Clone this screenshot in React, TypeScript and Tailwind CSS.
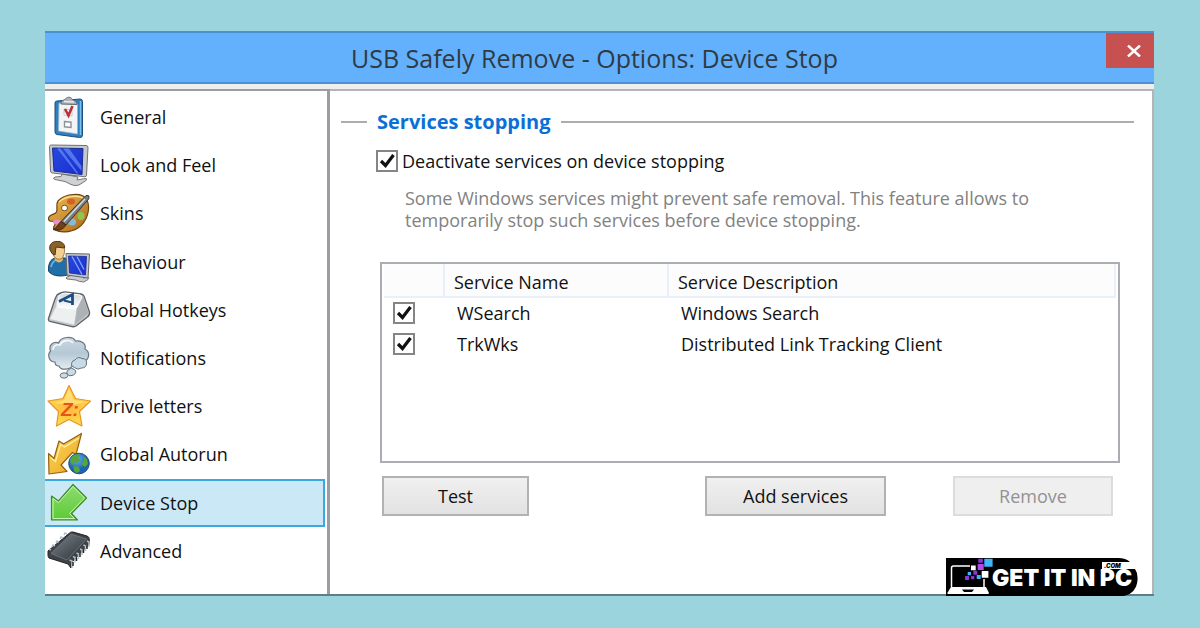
import { useState } from "react";
import type { ReactNode } from "react";

interface Page {
  name: string;
  icon: ReactNode;
}

interface Service {
  name: string;
  description: string;
}

const pages: Page[] = [
  {
    name: "General",
    icon: (
      <>
        <path d="M8 8q0-2 2-2L33 4q2.500 0 2.500 2.500V40q0 3-3 2.500L10 39.500q-2-.4-2-2.500z" fill="#2f7fc0" stroke="#1c4f80" />
        <path d="M33.500 6v34" stroke="#7cc0ee" strokeWidth="1.500" />
        <path d="M12 8l18.500 1v30L11.500 36z" fill="#f2f4f6" stroke="#9fb4c4" strokeWidth=".8" />
        <path d="M14 9c0-4 3-3.500 5-5.500 2-2 5-1.500 6 .5 1 2 5 1 5 5.500z" fill="#aeb4ba" stroke="#63696f" />
        <path d="M17 6.500l10 .5" stroke="#e8ebee" strokeWidth="1.500" />
        <path d="M17 14l8 1v6l-8-1z" fill="#fff" stroke="#c9c9d2" />
        <path d="M18 14l3.500 6.500 4-9.500" fill="none" stroke="#b8323a" strokeWidth="2.600" />
        <path d="M17.500 26.500l6.500.7v5.300l-6.500-.7z" fill="#fff" stroke="#8e9299" strokeWidth="1.400" />
      </>
    ),
  },
  {
    name: "Look and Feel",
    icon: (
      <>
        <path d="M15 31l16 3-1 3 8-1.500q3 0 1 2l-7 4.500q-4 1.500-8-.5l-6-3-10-2q-3-1 0-2.500l6-.5z" fill="#cfd2d5" stroke="#777" />
        <path d="M2.500 3.500q0-1.500 2-1.500l34.500.5q2 0 2 2L39.500 32q0 2-2 1.700L5.500 30q-2-.3-2-2z" fill="#c6c9cc" stroke="#6d7074" />
        <path d="M5.500 5l30.500.5-1 26L7 28z" fill="url(#screen)" stroke="#1d2b8c" />
        <path d="M10 5.500l3.500 0 18 25-2-.3zM16 5.500l6 0L34.500 23v5z" fill="#6f95f7" opacity=".65" />
      </>
    ),
  },
  {
    name: "Skins",
    icon: (
      <>
        <path d="M11 10C18 2 36 1 40 9c4 9 0 22-9 28-8 5-19 5-24 1-2-2 3-5 1-7-3-2-6 1-6.500-3C1 23 8 24 9.500 21c1.500-4-1-8 1.500-11z" fill="url(#wood)" stroke="#6e4312" strokeWidth="1.200" />
        <path d="M12 11C19 4 34 3.500 38 9" fill="none" stroke="#ffe39a" strokeWidth="1.300" />
        <ellipse cx="17.500" cy="17" rx="3" ry="2.800" fill="#fff" stroke="#7c521c" />
        <ellipse cx="24" cy="10.500" rx="4" ry="3" fill="#d85b28" />
        <ellipse cx="10" cy="31" rx="4" ry="2.500" fill="#e58fcb" />
        <ellipse cx="25" cy="31" rx="4" ry="3.500" fill="#80bddc" />
        <ellipse cx="34" cy="25" rx="3.500" ry="4" fill="#8fc552" />
        <path d="M38 5.500q2-2 4-.5.500 3-2 5L19 34l-5-3.500z" fill="#777d80" stroke="#34383a" />
        <path d="M38 8L17 30.500" stroke="#d6dbde" strokeWidth="1.500" />
        <path d="M14 30.500l5 3.500c-3 5-8 6-13 4.500 4-1 5-6 8-8z" fill="#704018" stroke="#43240b" />
      </>
    ),
  },
  {
    name: "Behaviour",
    icon: (
      <>
        <path d="M1.500 31C1 23 4 19 8 18h10c4 2 5 6 5 16-6 3-18 3-21.500-3z" fill="#226fa8" stroke="#123f63" />
        <path d="M4 27q1-5 5-7" fill="none" stroke="#61b4e4" strokeWidth="1.800" />
        <path d="M6 13l9 1 1 6q-4 5-8 0z" fill="#e6b36a" />
        <path d="M5.500 6l11-1c2 5 1 11-2 13.500-3 1.500-6 .5-8-3z" fill="#f3cf91" stroke="#8a632b" strokeWidth=".8" />
        <path d="M3 10C1.500 4 6 1 10.500 1.500c4-.5 8 3 7 6.500L9 7l-1 8-2.500-1z" fill="#8a6426" stroke="#4b3512" />
        <path d="M25 35l12 2-1 1 5-.5q2 .5 0 2l-4 2.500q-5 0-8-2l-9-1q-2-1 0-2z" fill="#c9cccf" stroke="#777" />
        <path d="M19 13.500l23.500.5-1.500 24L20 35z" fill="#c5c8cc" stroke="#63676c" />
        <path d="M21.500 16l18 .5-1 18.500-16-2z" fill="url(#screen)" stroke="#1d2b8c" strokeWidth=".8" />
        <path d="M25 16.500l10 18M30 16.500l7 13" stroke="#87a8fa" strokeWidth="1.300" />
      </>
    ),
  },
  {
    name: "Global Hotkeys",
    icon: (
      <>
        <path d="M10 7q2-2 8-3l16 2q2 .3 3 2l5.500 16q.5 3-2 5L29 38q-2 1-4 .7L3 33.500q-2-.7-1.500-3L8 11z" fill="#c4c7ca" stroke="#606468" strokeWidth="1.300" />
        <path d="M9.500 18l20 3-2.500 15.500L3 31z" fill="#edf0f1" />
        <path d="M30 21l6-13 5.500 17L28 36.500z" fill="#aeb2b6" />
        <path d="M12 8q2-2.500 6-3l15 2q2 1 1.500 3L30 19q-1 2.500-4 2l-14.500-2q-2-1-1.500-3z" fill="url(#key)" stroke="#fff" />
        <path d="M12 13.500l13.500-7v10.500" fill="none" stroke="#1b4e83" strokeWidth="2.800" />
        <path d="M17 12.500l8 2" stroke="#1b4e83" strokeWidth="2" />
      </>
    ),
  },
  {
    name: "Notifications",
    icon: (
      <>
        <path d="M8 26C2 26 0 19 3.500 15 1 9 7 5 11.500 7 14 0 26 0 28.500 5c6-1 11 3 9.500 8 6 3 4 12-2 12-2 3-6 4-9 3-3 6-13 7-15 2-2 0-4-1-4-4z" fill="url(#cloud)" stroke="#6c7780" strokeWidth="1.200" />
        <path d="M6 14c0-4 3-6 7-5 2-5 10-6 13-2" fill="none" stroke="#f4f9fc" strokeWidth="1.600" />
        <path d="M28 24q3-4 7-1.500 5 0 4.500 4.500 0 5-5 5-4 2.500-7-.5-4-1-3-4 .5-3 3.500-3.500z" fill="#c7dae5" stroke="#65727b" />
        <path d="M21.500 33.500q3-2.500 6 0 3 3-1 5.500-4 2-6-.5-2-2.500 1-5z" fill="#cbdce6" stroke="#65727b" />
        <ellipse cx="17" cy="39.500" rx="3.800" ry="2.700" fill="#cbdce6" stroke="#65727b" />
      </>
    ),
  },
  {
    name: "Drive letters",
    icon: (
      <>
        <path d="M22 1.500l6.500 13 15 2.500-11 10.500 2.500 14.500-13-6.500-12.500 6.500 2-14.500L1 17l15-2.500z" fill="url(#star)" stroke="#e69525" strokeWidth="1.200" strokeLinejoin="round" />
        <path d="M22 5l5 11 12 2-14 3-18-2 10-3z" fill="#fff3a3" opacity=".55" />
        <text x="14" y="32" fontFamily="Liberation Sans, sans-serif" fontSize="19" fontWeight="700" fontStyle="italic" fill="#e4541b">Z:</text>
      </>
    ),
  },
  {
    name: "Global Autorun",
    icon: (
      <>
        <path d="M34.500 1.500L29 22.500l-3.500-2L14 33l6 6.500-18 2.500L1.500 21.500l5.500 5L12 9l4.500 3z" fill="url(#gold)" stroke="#93620f" strokeWidth="1.200" strokeLinejoin="round" />
        <path d="M32 6L17.500 15l-4-2.500-5 17-5-4" fill="none" stroke="#fff0a8" strokeWidth="1.200" />
        <circle cx="32" cy="31.500" r="10.300" fill="url(#globe)" stroke="#1d4e80" />
        <path d="M24 26c3-4 7-4.500 9-3l-2 3 3 2-4 3-3-1-1 3-3-3zM36 24l4 3 1 5-3 3-4-3 3-3zM27 34l5 1 1 4-3 2c-3-1-4-4-3-7z" fill="#57a638" />
      </>
    ),
  },
  {
    name: "Device Stop",
    icon: (
      <>
        <path d="M26 3.500l13.500 13.500-15 15.500 6 6.500H4.500V15l7 5z" fill="url(#green)" stroke="#3c8d27" strokeWidth="1.200" strokeLinejoin="round" />
        <path d="M26 5.500L37.500 17l-15 15.500 5 5H6V17.500l5.500 4z" fill="none" stroke="#c9f5b4" />
      </>
    ),
  },
  {
    name: "Advanced",
    icon: (
      <>
        <path d="M22 4.500q1.500-2 4-1.500l14 4q2.500 1 2.300 3.500V15L24 34v5l-3-4-19-6q-1-1-1-3v-4z" fill="#3d4348" stroke="#202427" />
        <path d="M24 5l15.500 5L20 31 4 24.500z" fill="url(#chip)" stroke="#747b80" strokeWidth=".8" />
        <path d="M40 12l2 1v5M36.500 16l2 1v5M33 20l2 1v5M29.500 24l2 1v5M26 27.500l2 1v5M22.500 31l2.500 1v7M20 5l-2-1-1 2M16 9l-2-1-1 2M12 13l-2-1-1 2M8 17l-2-1-1 2M4 21l-2-1" fill="none" stroke="#b9bec2" strokeWidth="1.500" />
        <path d="M40 17v3M36.500 21v3M33 25v3M29.500 29v3M26 33v4" stroke="#22272a" strokeWidth="1.500" />
      </>
    ),
  },
];

const services: Service[] = [
  { name: "WSearch", description: "Windows Search" },
  { name: "TrkWks", description: "Distributed Link Tracking Client" },
];

// Gradients shared by the sidebar icons
function IconDefs() {
  return (
    <svg className="absolute h-0 w-0" aria-hidden="true">
      <defs>
        <linearGradient id="screen" x1="0" y1="0" x2="1" y2="1">
          <stop offset="0" stopColor="#2749e0" />
          <stop offset="1" stopColor="#1a2ed0" />
        </linearGradient>
        <linearGradient id="wood" x1="0" y1="0" x2="1" y2="1">
          <stop offset="0" stopColor="#f0bc4c" />
          <stop offset="1" stopColor="#a9691c" />
        </linearGradient>
        <linearGradient id="key" x1="0" y1="0" x2="0" y2="1">
          <stop offset="0" stopColor="#d3dadf" />
          <stop offset="1" stopColor="#ffffff" />
        </linearGradient>
        <linearGradient id="cloud" x1="0" y1="0" x2="0" y2="1">
          <stop offset="0" stopColor="#cbd9e2" />
          <stop offset="0.500" stopColor="#b4c8d5" />
          <stop offset="1" stopColor="#e3edf2" />
        </linearGradient>
        <radialGradient id="star">
          <stop offset="0" stopColor="#ffb637" />
          <stop offset="1" stopColor="#ffd84f" />
        </radialGradient>
        <linearGradient id="gold" x1="0" y1="0" x2="1" y2="1">
          <stop offset="0" stopColor="#ffd75a" />
          <stop offset="1" stopColor="#e9a624" />
        </linearGradient>
        <radialGradient id="globe" cx="0.400" cy="0.300">
          <stop offset="0" stopColor="#63b8f2" />
          <stop offset="1" stopColor="#1f62ad" />
        </radialGradient>
        <linearGradient id="green" x1="0" y1="0" x2="0" y2="1">
          <stop offset="0" stopColor="#8fdb72" />
          <stop offset="1" stopColor="#5ccb35" />
        </linearGradient>
        <linearGradient id="chip" x1="0" y1="0" x2="1" y2="1">
          <stop offset="0" stopColor="#7a828a" />
          <stop offset="1" stopColor="#2c3136" />
        </linearGradient>
      </defs>
    </svg>
  );
}

interface CheckProps {
  id?: string;
  label?: string;
}

function Check({ id, label }: CheckProps) {
  return (
    <span className="grid h-[22px] w-[22px] shrink-0">
      <input
        id={id}
        type="checkbox"
        defaultChecked
        aria-label={label}
        className="peer col-start-1 row-start-1 h-[22px] w-[22px] appearance-none border-2 border-[#858585] bg-white"
      />
      <svg viewBox="0 0 22 22" className="pointer-events-none invisible col-start-1 row-start-1 peer-checked:visible">
        <path d="M5 11l4.500 4.500L17.500 5" fill="none" stroke="#111" strokeWidth="3.200" />
      </svg>
    </span>
  );
}

function SiteLogo() {
  return (
    <a href="#" aria-label="Get It In PC" className="absolute right-4 -bottom-0.5 grid h-[38px] w-48">
      <svg viewBox="0 0 192 38" className="col-start-1 row-start-1 h-full w-full">
        <path d="M0 0h172q8 0 12 4h-28v7h33q3 4 2.500 11-1 13-13.500 16H0z" fill="#000" />
        <path d="M156 4h28l5 7h-33z" fill="#fff" />
        <path d="M24 8H7.500Q5.500 8 5.500 10v19M38 21v8" fill="none" stroke="#fff" strokeWidth="1.500" />
        <path d="M5 29h35l3 6q0 1-1.500 1h-39Q1 36 1.300 35z" fill="#fff" />
        <path d="M16 31.500h12l-2 2.500h-8z" fill="#000" />
        <path d="M38.300.7h8.300v8h-8.300zM21.700 14H25v3.300h-3.300zM30.700 17h4v4h-4z" fill="#3fb6f5" />
        <path d="M32.300.7h4.500v4h-4.500zM27.300 12.700h4v4h-4zM19 18h4v4h-4zM25 18h3.300v3.300H25z" fill="#8e33d6" />
        <path d="M31.700 6h6v6h-6z" fill="#b04bea" />
        <path d="M25 7.500h4.700v4.700H25zM35.700 13h6.700v6.700h-6.700z" fill="#fff" />
      </svg>
      <span className="col-start-1 row-start-1 pt-3 pl-[46px] font-['Inter',sans-serif] text-[23px] leading-4 font-black whitespace-nowrap text-white">
        GET IT IN PC
      </span>
      <span className="col-start-1 row-start-1 pt-1 pl-[158px] font-['Inter',sans-serif] text-[6px] leading-[7px] font-black text-black italic">
        .COM
      </span>
    </a>
  );
}

const buttonStyle =
  "h-10 border-2 border-[#b2b2b2] bg-linear-to-b from-[#f0f0f0] to-[#e2e2e2] disabled:border-[#dcdcdc] disabled:from-[#efefef] disabled:to-[#efefef] disabled:text-[#929292]";

export default function App() {
  const [selected, setSelected] = useState("Device Stop");

  return (
    <div className="min-h-screen bg-[#9bd4dd] pt-[31px] pr-[46px] pb-8 pl-[45px] font-['Open_Sans',sans-serif] text-[18px] leading-[22px] text-[#111]">
      <IconDefs />
      <div className="relative flex flex-col border-b-2 border-[#5f7f86] bg-white">
        <header className="flex h-[53px] border-y-2 border-[#4d90cf] bg-[#63b1fc]">
          <h1 className="flex flex-1 items-center justify-center pl-[38px] text-[25px] text-[#2f3a45]">
            USB Safely Remove - Options: Device Stop
          </h1>
          <button aria-label="Close" className="flex h-[35px] w-12 items-center justify-center bg-[#c75050] pl-2">
            <svg viewBox="0 0 14 12" className="h-3 w-3.5">
              <path d="M1 0.500l12 11M13 0.500l-12 11" stroke="#fff" strokeWidth="2.500" />
            </svg>
          </button>
        </header>

        <div className="flex bg-[#eee] pt-[5px]">
          <nav className="w-[285px] shrink-0 border-t-2 border-r-3 border-[#9b9da3] bg-white pt-0.5 pr-0.5 pb-[19px]">
            <ul className="grid h-[482px] auto-rows-fr">
              {pages.map((page) => (
                <li key={page.name} className="grid">
                  <button
                    onClick={() => setSelected(page.name)}
                    className={`flex items-center border-y-2 border-r-2 text-left ${
                      page.name === selected ? "border-[#3ba9e0] bg-[#cbe8f6]" : "border-transparent"
                    }`}
                  >
                    <svg viewBox="0 0 44 44" className="ml-0.5 h-11 w-11 shrink-0">
                      {page.icon}
                    </svg>
                    <span className="pl-[9px]">{page.name}</span>
                  </button>
                </li>
              ))}
            </ul>
          </nav>

          <main className="flex-1 border-t-2 border-r-2 border-[#b4b4b4] bg-white pt-5 pr-[18px] pl-[11px]">
            <h2 className="flex items-center gap-2.5 text-[20px] font-bold text-[#0a6fd6]">
              <span className="h-0.5 w-[26px] bg-[#adadad]" />
              Services stopping
              <span className="h-0.5 flex-1 bg-[#adadad]" />
            </h2>

            <div className="flex items-center gap-1 pt-[17px] pl-[35px]">
              <Check id="deactivate" />
              <label htmlFor="deactivate">Deactivate services on device stopping</label>
            </div>
            <p className="pt-[15px] pl-16 text-[#828282]">
              Some Windows services might prevent safe removal. This feature allows to
              <br />
              temporarily stop such services before device stopping.
            </p>

            <div className="mt-[31px] mr-[14px] ml-[39px] h-[201px] border-2 border-[#abadb3] px-0.5">
              <table className="w-full table-fixed border-collapse text-left">
                <thead>
                  <tr className="h-[33px] border-b-2 border-[#e8f0fa] bg-[#fcfcfc]">
                    <th className="w-[60px] border-r-2 border-[#e8f0fa]" aria-label="Enabled" />
                    <th className="w-56 border-r-2 border-[#e8f0fa] pt-1 pl-[9px] font-normal">Service Name</th>
                    <th className="border-r-2 border-[#e8f0fa] pt-1 pl-[9px] font-normal">Service Description</th>
                  </tr>
                </thead>
                <tbody>
                  {services.map((service) => (
                    <tr key={service.name} className="h-[31px]">
                      <td className="pl-[9px]">
                        <Check label={service.name} />
                      </td>
                      <td className="pl-[13px]">{service.name}</td>
                      <td className="pl-[13px]">{service.description}</td>
                    </tr>
                  ))}
                </tbody>
              </table>
            </div>

            <div className="mt-[13px] mr-[21px] ml-[41px] flex">
              <button className={`w-[147px] ${buttonStyle}`}>Test</button>
              <button className={`mr-[67px] ml-auto w-[181px] ${buttonStyle}`}>Add services</button>
              <button disabled className={`w-40 ${buttonStyle}`}>
                Remove
              </button>
            </div>
          </main>
        </div>

        <SiteLogo />
      </div>
    </div>
  );
}
